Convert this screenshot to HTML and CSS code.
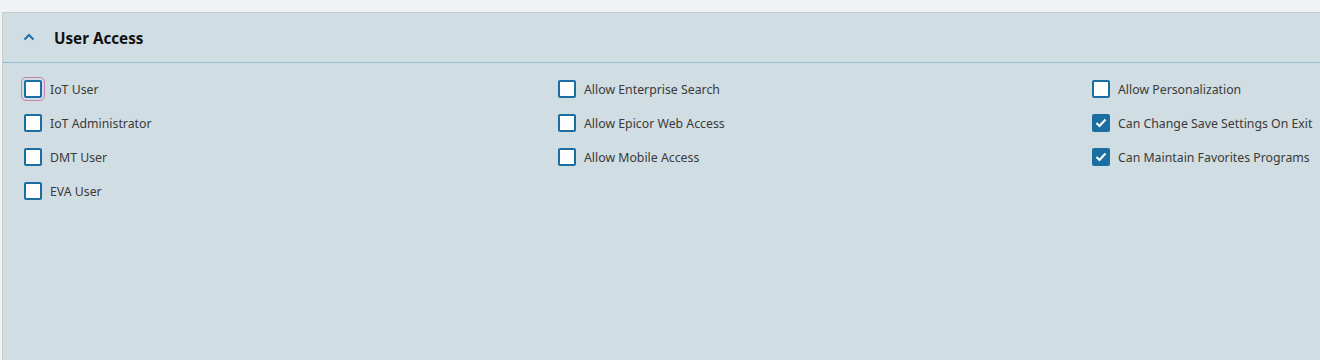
FILE: index.html
```html
<!DOCTYPE html>
<html>
<head>
  <title>User Access</title>
  <meta name="viewport" content="width=device-width,initial-scale=1">
  <link rel="stylesheet" href="styles.css">
</head>
<body>
  <div class="page">
    <section class="panel">
      <header class="panel-header">
        <svg class="chevron" width="12" height="8" viewBox="0 0 12 8">
          <path d="M1.5 6.5 L6 2 L10.5 6.5" fill="none" stroke="#1a72a8" stroke-width="2"/>
        </svg>
        <h2>User Access</h2>
      </header>
      <div class="panel-body">
        <div class="col">
          <label class="check focused"><span class="box"></span>IoT User</label>
          <label class="check"><span class="box"></span>IoT Administrator</label>
          <label class="check"><span class="box"></span>DMT User</label>
          <label class="check"><span class="box"></span>EVA User</label>
        </div>
        <div class="col">
          <label class="check"><span class="box"></span>Allow Enterprise Search</label>
          <label class="check"><span class="box"></span>Allow Epicor Web Access</label>
          <label class="check"><span class="box"></span>Allow Mobile Access</label>
        </div>
        <div class="col">
          <label class="check"><span class="box"></span>Allow Personalization</label>
          <label class="check checked"><span class="box"><svg width="12" height="10" viewBox="0 0 12 10"><path d="M1.5 5 L4.5 8 L10.5 1.5" fill="none" stroke="#fff" stroke-width="2"/></svg></span>Can Change Save Settings On Exit</label>
          <label class="check checked"><span class="box"><svg width="12" height="10" viewBox="0 0 12 10"><path d="M1.5 5 L4.5 8 L10.5 1.5" fill="none" stroke="#fff" stroke-width="2"/></svg></span>Can Maintain Favorites Programs</label>
        </div>
      </div>
    </section>
  </div>
</body>
</html>
```

FILE: styles.css
```css
html,
body {
  margin: 0;
  height: 100%;
  font-family: "Noto Sans", "Liberation Sans", sans-serif;
  color: #333;
  background: #eff3f6;
}

.page {
  padding: 12px 0 0 2px;
  height: 100%;
  box-sizing: border-box;
}

.panel {
  height: 100%;
  background: #d0dde2;
  border-top: 1px solid #c9cccd;
  border-left: 1px solid #c9cccd;
  box-sizing: border-box;
}

.panel-header {
  display: flex;
  align-items: center;
  height: 49px;
  padding-left: 20px;
  border-bottom: 1px solid #8fc0d2;
}

.chevron {
  margin-right: 19px;
  margin-top: -2px;
}

.panel-header h2 {
  margin: 0;
  font-size: 15.2px;
  font-weight: 700;
  color: #111;
}

.panel-body {
  display: grid;
  grid-template-columns: 534px 534px 1fr;
  padding: 17px 0 0 21px;
}

.col {
  display: flex;
  flex-direction: column;
  gap: 16px;
}

.check {
  display: flex;
  align-items: center;
  height: 18px;
  font-size: 12.3px;
  color: #3a3a3a;
  white-space: nowrap;
}

.box {
  width: 18px;
  height: 18px;
  box-sizing: border-box;
  border: 2px solid #1a6ea1;
  border-radius: 2px;
  background: #fff;
  margin-right: 8px;
  display: flex;
  align-items: center;
  justify-content: center;
}

.focused .box {
  outline: 1px solid #c77fb2;
  outline-offset: 2px;
}

.checked .box {
  background: #1a6ea1;
}
```
